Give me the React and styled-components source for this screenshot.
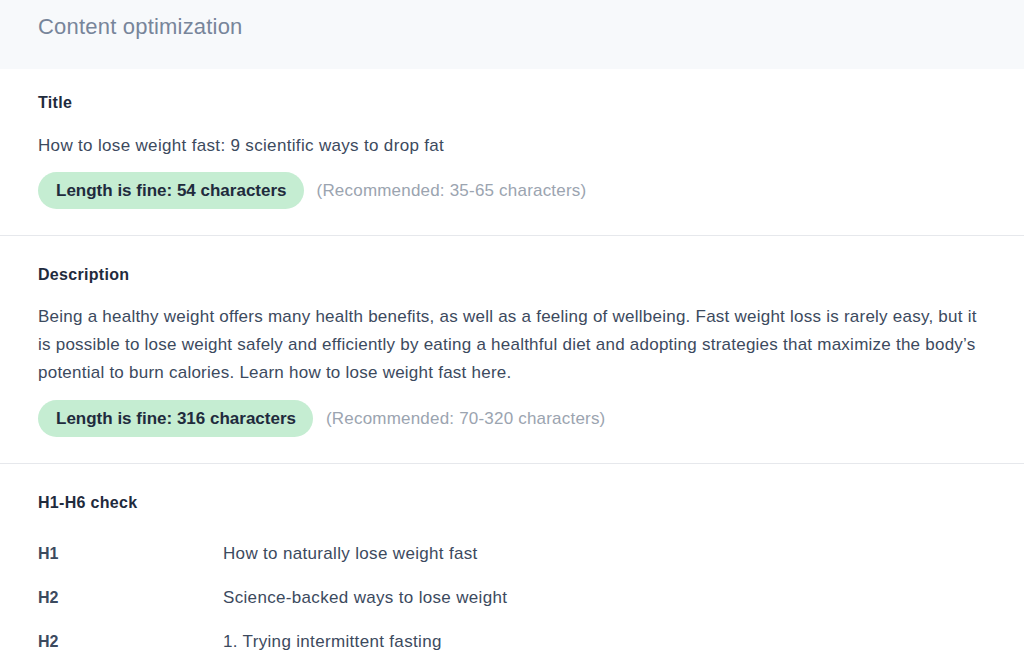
import React from 'react';
import styled, { createGlobalStyle } from 'styled-components';

const Global = createGlobalStyle`
  body {
    margin: 0;
    background: #ffffff;
    font-family: 'Liberation Sans', Arial, Helvetica, sans-serif;
    -webkit-font-smoothing: antialiased;
  }
`;

const Page = styled.div`
  width: 1024px;
  background: #ffffff;
`;

const Header = styled.header`
  height: 69px;
  background: #f7f9fb;
  padding: 0 38px;
  display: flex;
  align-items: flex-start;
  box-sizing: border-box;
`;

const HeaderTitle = styled.h1`
  margin: 14px 0 0;
  font-size: 22px;
  line-height: 26px;
  letter-spacing: 0.2px;
  font-weight: 400;
  color: #77859a;
`;

const Section = styled.section`
  padding: ${p => (p.$first ? '24px' : '29px')} 38px 26px;
  border-bottom: ${p => (p.$last ? 'none' : '1px solid #e6e8ec')};
`;

const Label = styled.h2`
  margin: 0;
  font-size: 16px;
  line-height: 20px;
  letter-spacing: 0.3px;
  font-weight: 700;
  color: #1f2b3d;
`;

const Text = styled.p`
  margin: ${p => p.$top || '21px'} 0 0;
  font-size: 17px;
  line-height: ${p => p.$lh || '24px'};
  letter-spacing: ${p => p.$ls || '0.33px'};
  color: #3c4a5e;
`;

const Status = styled.div`
  display: flex;
  align-items: center;
  gap: 13px;
  margin-top: ${p => p.$top || '14px'};
`;

const Pill = styled.span`
  display: inline-flex;
  align-items: center;
  height: 37px;
  padding: 0 17px 0 18px;
  border-radius: 19px;
  background: #c5edd2;
  color: #1f2b3d;
  font-size: 17px;
  font-weight: 700;
`;

const Hint = styled.span`
  font-size: 17px;
  letter-spacing: 0.2px;
  color: #9ba4b0;
`;

const HeadingList = styled.div`
  margin-top: 19px;
`;

const HeadingRow = styled.div`
  display: grid;
  grid-template-columns: 185px 1fr;
  align-items: center;
  height: 44px;
`;

const Tag = styled.span`
  font-size: 16px;
  font-weight: 700;
  color: #3c4a5e;
`;

const HeadingText = styled.span`
  font-size: 17px;
  letter-spacing: 0.33px;
  color: #3c4a5e;
`;

const headings = [
  ['H1', 'How to naturally lose weight fast'],
  ['H2', 'Science-backed ways to lose weight'],
  ['H2', '1. Trying intermittent fasting'],
];

export default function App() {
  return (
    <Page>
      <Global />
      <Header>
        <HeaderTitle>Content optimization</HeaderTitle>
      </Header>

      <Section $first>
        <Label>Title</Label>
        <Text>How to lose weight fast: 9 scientific ways to drop fat</Text>
        <Status>
          <Pill>Length is fine: 54 characters</Pill>
          <Hint>(Recommended: 35-65 characters)</Hint>
        </Status>
      </Section>

      <Section>
        <Label>Description</Label>
        <Text $top="18px" $lh="28px" $ls="0.24px">
          Being a healthy weight offers many health benefits, as well as a feeling of wellbeing. Fast weight loss is rarely easy, but it is possible to lose weight safely and efficiently by eating a healthful diet and adopting strategies that maximize the body’s potential to burn calories. Learn how to lose weight fast here.
        </Text>
        <Status $top="13px">
          <Pill>Length is fine: 316 characters</Pill>
          <Hint>(Recommended: 70-320 characters)</Hint>
        </Status>
      </Section>

      <Section $last>
        <Label>H1-H6 check</Label>
        <HeadingList>
          {headings.map(([tag, text], i) => (
            <HeadingRow key={i}>
              <Tag>{tag}</Tag>
              <HeadingText>{text}</HeadingText>
            </HeadingRow>
          ))}
        </HeadingList>
      </Section>
    </Page>
  );
}
